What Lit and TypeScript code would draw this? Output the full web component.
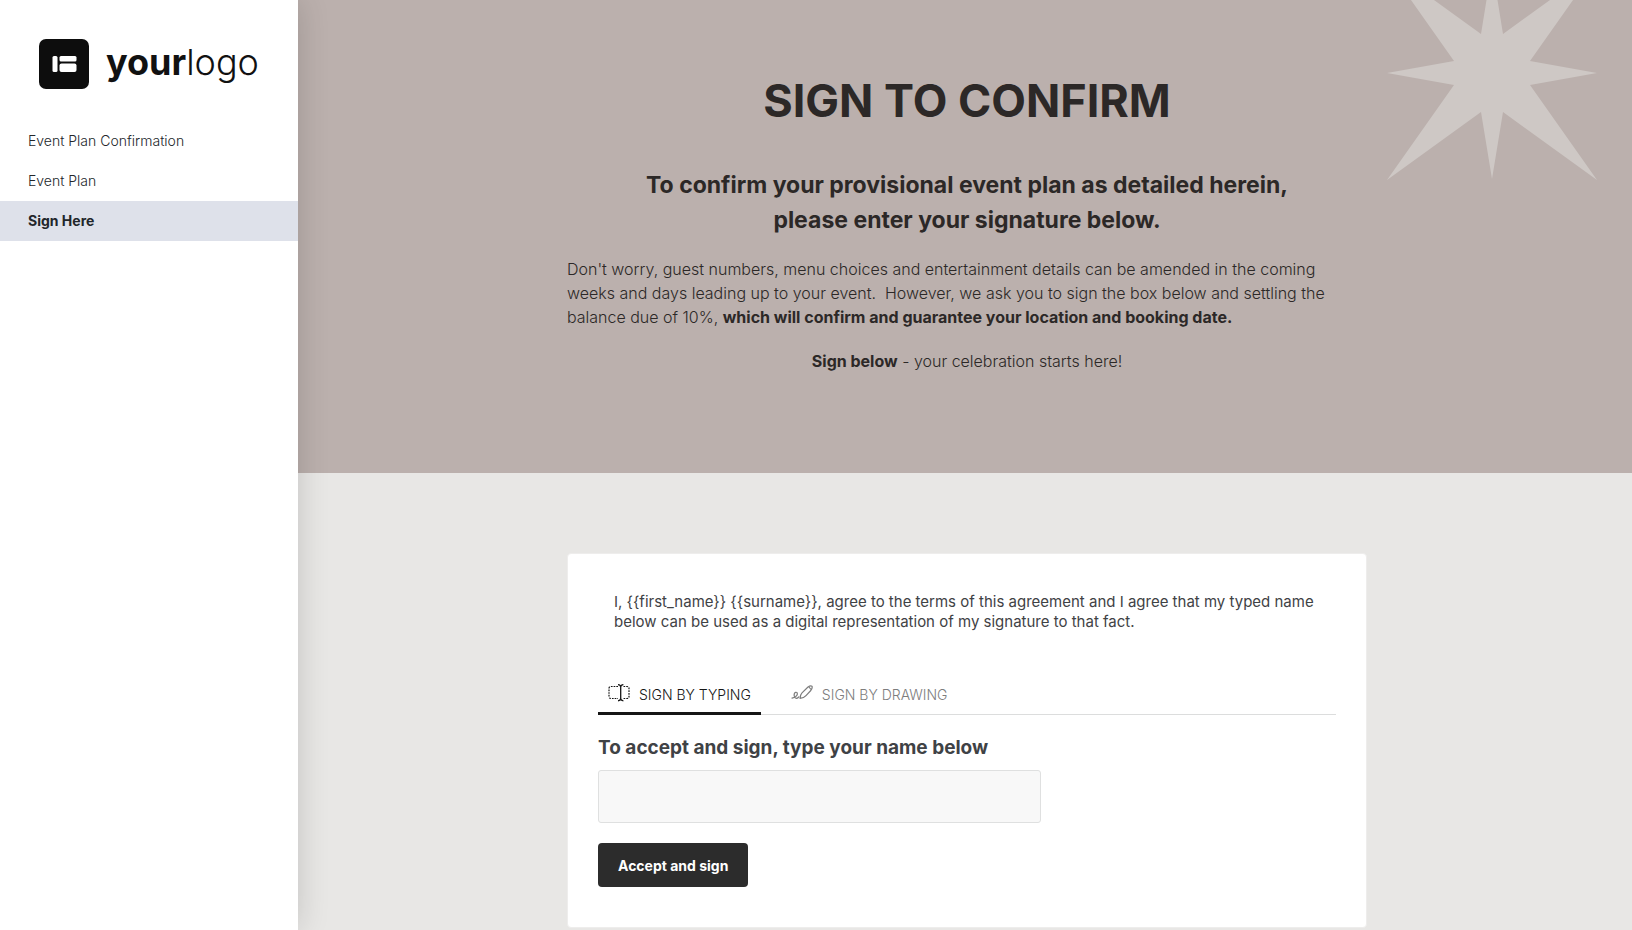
import { LitElement, html, css } from "lit";
import { customElement, state } from "lit/decorators.js";

type Mode = "type" | "draw";

@customElement("app-root")
export class AppRoot extends LitElement {
  @state() private mode: Mode = "type";

  static styles = css`
    :host {
      display: grid;
      grid-template-columns: 298px minmax(0, 1fr);
      min-height: 100vh;
      background: #e8e7e5;
      color: #2c2827;
      font-family: Inter, "Liberation Sans", sans-serif;
      font-size: 16px;
      font-weight: 300;
    }
    * {
      box-sizing: border-box;
    }
    h1, h2, p, ul {
      margin: 0;
      padding: 0;
    }
    strong {
      font-weight: 700;
    }
    .side {
      position: relative;
      z-index: 1;
      background: #fff;
      box-shadow: 0 0 30px rgba(0, 0, 0, 0.16);
    }
    .logo {
      display: flex;
      align-items: center;
      gap: 17px;
      padding: 39px 0 32px 39px;
      color: #111;
      font-size: 36px;
      line-height: 46px;
      text-decoration: none;
    }
    .mark {
      width: 50px;
      height: 50px;
      flex: none;
    }
    .wordmark {
      padding-bottom: 4px;
    }
    .nav {
      list-style: none;
    }
    .link {
      display: block;
      padding: 0 28px;
      color: #22262a;
      font-size: 14px;
      line-height: 40px;
      text-decoration: none;
    }
    .link.current {
      background: #dee1ea;
      font-weight: 700;
    }
    .main {
      min-width: 0;
    }
    .hero {
      position: relative;
      overflow: hidden;
      padding: 71px 24px 100px 28px;
      background: #bbb0ad;
    }
    .star {
      position: absolute;
      right: 33px;
      top: -36px;
      width: 214px;
      height: 216px;
      fill: #cec8c5;
    }
    .column {
      position: relative;
      max-width: 800px;
      margin: 0 auto;
    }
    .title {
      margin-bottom: 37px;
      font-size: 45px;
      font-weight: 700;
      line-height: 60px;
      text-align: center;
    }
    .lead {
      margin-bottom: 19px;
      font-size: 23px;
      font-weight: 700;
      line-height: 35px;
      text-align: center;
    }
    .copy {
      line-height: 24px;
    }
    .closing {
      margin-top: 20px;
      text-align: center;
    }
    .body {
      padding: 80px 24px 0 28px;
    }
    .card {
      padding: 38px 30px 40px;
      border: 1px solid #eeedec;
      border-radius: 4px;
      background: #fff;
      color: #3f4245;
    }
    .terms {
      margin: 0 16px 44px;
      font-size: 15px;
      font-weight: 400;
      line-height: 20px;
    }
    .tabs {
      display: flex;
      gap: 20px;
      margin-bottom: 21px;
      border-bottom: 1px solid #dcdddd;
    }
    .tab {
      display: flex;
      align-items: center;
      gap: 9px;
      height: 39px;
      margin-bottom: -1px;
      padding: 0 10px;
      border: 0;
      border-bottom: 3px solid transparent;
      background: none;
      color: #7d7d7d;
      font: inherit;
      font-size: 14px;
    }
    .tab.active {
      border-color: #151515;
      color: #151515;
    }
    .icon {
      width: 22px;
      height: 20px;
      fill: none;
      stroke: currentColor;
    }
    .label {
      display: block;
      margin-bottom: 10px;
      font-size: 19px;
      font-weight: 700;
      line-height: 24px;
    }
    .field {
      display: block;
      width: 60%;
      height: 53px;
      margin-bottom: 20px;
      padding: 0 16px;
      border: 1px solid #dfe0e0;
      border-radius: 3px;
      background: #f8f8f8;
      color: inherit;
      font: inherit;
      font-size: 20px;
    }
    .submit {
      height: 44px;
      padding: 0 20px;
      border: 0;
      border-radius: 4px;
      background: #2c2c2c;
      color: #fff;
      font: inherit;
      font-size: 14px;
      font-weight: 700;
    }
  `;

  private tab(mode: Mode, label: string, icon: unknown) {
    const active = this.mode === mode;
    return html`<button
      class="tab ${active ? "active" : ""}"
      type="button"
      role="tab"
      aria-selected=${active}
      @click=${() => (this.mode = mode)}
    >
      ${icon}<span>${label}</span>
    </button>`;
  }

  render() {
    return html`
      <aside class="side">
        <a class="logo" href="#">
          <svg class="mark" viewBox="0 0 50 50" aria-hidden="true">
            <rect width="50" height="50" rx="7" fill="#0d0d0d" />
            <g fill="#fff">
              <rect x="13.500" y="17" width="5" height="16" rx="1.5" />
              <rect x="20.500" y="17" width="17" height="5.500" rx="1.5" />
              <rect x="20.500" y="24.500" width="17" height="8.500" rx="2" />
            </g>
          </svg>
          <span class="wordmark"><strong>your</strong>logo</span>
        </a>
        <ul class="nav">
          <li><a class="link" href="#confirmation">Event Plan Confirmation</a></li>
          <li><a class="link" href="#plan">Event Plan</a></li>
          <li><a class="link current" href="#sign" aria-current="page">Sign Here</a></li>
        </ul>
      </aside>
      <main class="main">
        <header class="hero">
          <svg class="star" viewBox="0 0 214 216" aria-hidden="true">
            <path d="M107 2 118 70 212 2 145 97 212 109 145 121 212 216 118 148 107 215 96 148 2 216 69 121 2 109 69 97 2 2 96 70Z" />
          </svg>
          <div class="column">
            <h1 class="title">SIGN TO CONFIRM</h1>
            <h2 class="lead">
              To confirm your provisional event plan as detailed herein,<br />please enter your signature below.
            </h2>
            <p class="copy">
              Don't worry, guest numbers, menu choices and entertainment details can be amended in the coming weeks
              and days leading up to your event.&nbsp; However, we ask you to sign the box below and settling the
              balance due of 10%, <strong>which will confirm and guarantee your location and booking date.</strong>
            </p>
            <p class="copy closing"><strong>Sign below</strong> - your celebration starts here!</p>
          </div>
        </header>
        <section class="body">
          <form class="column card" @submit=${(e: Event) => e.preventDefault()}>
            <p class="terms">
              I, {{first_name}} {{surname}}, agree to the terms of this agreement and I agree that my typed name
              below can be used as a digital representation of my signature to that fact.
            </p>
            <div class="tabs" role="tablist">
              ${this.tab("type", "SIGN BY TYPING", html`<svg class="icon" viewBox="0 0 22 20" aria-hidden="true">
                <path stroke-width="1.2" stroke-dasharray="1.7 1" d="M10 2.500H3Q1 2.500 1 4.500V12.500Q1 14.500 3 14.500H10M15.500 2.500H19Q21 2.500 21 4.500V12.500Q21 14.500 19 14.500H15.500" />
                <path stroke-width="1.3" d="M10 .7Q12.700 1 12.700 3Q12.700 1 15.400 .7M12.700 2.500V14.500M10 16.800Q12.700 16.500 12.700 14.500Q12.700 16.500 15.400 16.800" />
              </svg>`)}
              ${this.tab("draw", "SIGN BY DRAWING", html`<svg class="icon" viewBox="0 0 22 20" aria-hidden="true">
                <g stroke-width="1.2" stroke-linejoin="round" stroke-linecap="round">
                  <path d="M9 14.300Q9.300 10.500 11 8.800L17 3Q19.500 1.300 21 2.200Q21.700 4 19.800 6.500L15 11.700Q13 14 9 14.300ZM18 3 20 5.500" />
                  <path d="M1 14.200Q5.500 13 6.300 10.300Q6.500 8 4.700 8.300Q2.800 9 3.200 12Q3.700 14.500 5.500 14.300Q7 14 7.800 12.800" />
                </g>
              </svg>`)}
            </div>
            <label class="label" for="name">To accept and sign, type your name below</label>
            <input class="field" id="name" type="text" autocomplete="name" />
            <button class="submit" type="submit">Accept and sign</button>
          </form>
        </section>
      </main>
    `;
  }
}
